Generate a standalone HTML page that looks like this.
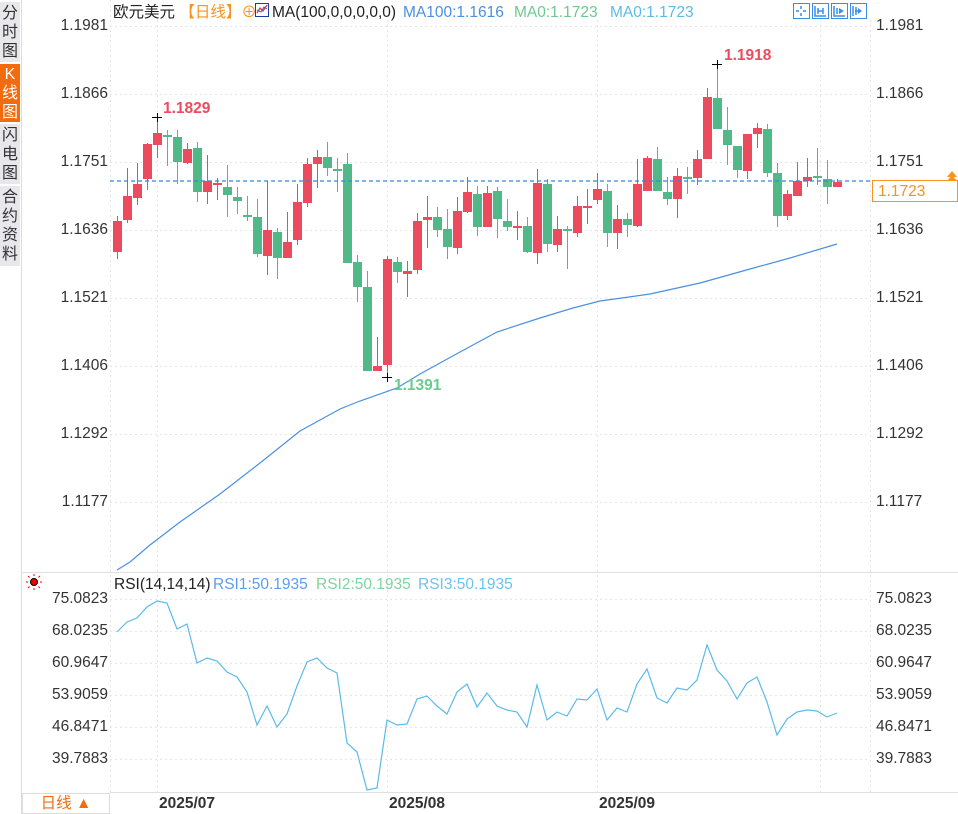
<!DOCTYPE html>
<html><head><meta charset="utf-8">
<style>
*{margin:0;padding:0;box-sizing:border-box}
body{width:958px;height:814px;background:#fff;position:relative;overflow:hidden;font-family:"Liberation Sans","Noto Sans CJK SC",sans-serif;}
.side{position:absolute;left:0;top:0;width:21px;height:814px;background:#fff;}
.tab{position:absolute;left:0;width:20px;background:#e8e8ec;color:#333;font-size:16px;line-height:19px;text-align:center;}
.tab.on{background:#f26b0f;color:#fff}
.t{position:absolute;font-size:15.5px;white-space:nowrap;line-height:17px}
.ax{position:absolute;font-size:15.5px;color:#333;line-height:17px}
svg{position:absolute;left:0;top:0}
</style></head><body>
<div class="side">
<div class="tab" style="top:2px;height:60px;padding-top:2px">分<br>时<br>图</div>
<div class="tab on" style="top:64px;height:58px;padding-top:1px">K<br>线<br>图</div>
<div class="tab" style="top:124px;height:60px;padding-top:2px">闪<br>电<br>图</div>
<div class="tab" style="top:186px;height:80px;padding-top:2px">合<br>约<br>资<br>料</div>
</div>
<svg id="s" width="958" height="814" viewBox="0 0 958 814"></svg>
<div class="t" style="left:113px;top:4px;color:#222">欧元美元 <span style="color:#f7931e">【日线】</span><span style="color:#f7931e">⊕</span></div>
<div class="t" style="left:272px;top:4px;color:#222">MA(100,0,0,0,0,0)</div>
<div class="t" style="left:403px;top:4px;color:#4a90e2">MA100:1.1616</div>
<div class="t" style="left:514px;top:4px;color:#6cc990">MA0:1.1723</div>
<div class="t" style="left:610px;top:4px;color:#5bbbe8">MA0:1.1723</div>
<div class="t" style="left:114px;top:576px;color:#222">RSI(14,14,14)</div>
<div class="t" style="left:213px;top:576px;color:#5b9ef0">RSI1:50.1935</div>
<div class="t" style="left:316px;top:576px;color:#7fd4a0">RSI2:50.1935</div>
<div class="t" style="left:418px;top:576px;color:#6cc3ee">RSI3:50.1935</div>
<div class="t" style="left:163px;top:100px;color:#eb4b5c;font-weight:bold">1.1829</div>
<div class="t" style="left:724px;top:47px;color:#eb4b5c;font-weight:bold">1.1918</div>
<div class="t" style="left:394px;top:377px;color:#6cc990;font-weight:bold">1.1391</div>
<div id="ax"></div>
<div class="t" style="left:872px;top:180px;width:86px;height:22px;border:1px solid #f7931e;color:#f7931e;padding:2px 0 0 5px">1.1723</div>
<div style="position:absolute;left:22px;top:793px;width:88px;height:21px;border:1px solid #ddd;color:#f26b0f;font-size:15.5px;text-align:center;line-height:20px">日线 ▲</div>
<div class="t" style="left:159px;top:795px;font-weight:bold;color:#333">2025/07</div>
<div class="t" style="left:389px;top:795px;font-weight:bold;color:#333">2025/08</div>
<div class="t" style="left:599px;top:795px;font-weight:bold;color:#333">2025/09</div>
<script>
var s=document.getElementById('s'),h='';
function L(x1,y1,x2,y2,c,w,d){h+='<line x1="'+x1+'" y1="'+y1+'" x2="'+x2+'" y2="'+y2+'" stroke="'+c+'" stroke-width="'+(w||1)+'"'+(d?' stroke-dasharray="'+d+'"':'')+'/>';}
L(21.5,0,21.5,814,'#ddd');L(110.5,0,110.5,792,'#e4e4e4',1,'2,3');L(870.5,20,870.5,792,'#e4e4e4',1,'2,3');
L(22,572.5,958,572.5,'#e0e0e0');L(110,792.5,958,792.5,'#e0e0e0');
var pl=['1.1981','1.1866','1.1751','1.1636','1.1521','1.1406','1.1292','1.1177'],ax='';
pl.forEach(function(p,i){var y=26+68*i;L(110,y+.5,870,y+.5,'#e6e6e6',1,'2,3');
ax+='<div class="ax" style="left:48px;top:'+(y-9)+'px;width:60px;text-align:right">'+p+'</div><div class="ax" style="left:876px;top:'+(y-9)+'px">'+p+'</div>';});
var rl=['75.0823','68.0235','60.9647','53.9059','46.8471','39.7883'];
rl.forEach(function(p,i){var y=599+32*i;L(110,y+.5,870,y+.5,'#e6e6e6',1,'2,3');
ax+='<div class="ax" style="left:30px;top:'+(y-9)+'px;width:78px;text-align:right">'+p+'</div><div class="ax" style="left:876px;top:'+(y-9)+'px">'+p+'</div>';});
document.getElementById('ax').innerHTML=ax;
[157,387,597,820].forEach(function(x){L(x+.5,20,x+.5,792,'#e6e6e6',1,'2,3');});
var C=[[221,252,216,259,1],[196,220,168,223,1],[184,198,163,205,1],[144,179,143,190,1],[133,145,118,158,1],[135,137,130,166,0],[137,162,130,184,0],[149,163,143,164,1],[148,192,142,202,0],[181,192,155,204,1],
[183,185,178,200,1],[187,195,165,217,0],[197,201,187,214,0],[215,217,196,221,0],[217,254,199,257,0],[230,256,181,275,1],[232,258,228,279,0],[242,258,212,258,1],[202,240,184,245,1],[164,203,158,207,1],
[157,164,150,188,1],[157,168,142,176,0],[169,171,158,192,0],[164,263,153,263,0],[262,287,255,302,0],[287,371,271,371,0],[366,371,337,371,1],[259,365,256,377,1],[262,272,257,283,0],[271,274,261,297,1],
[221,270,213,274,1],[217,220,196,248,1],[217,230,207,237,0],[229,247,209,259,0],[211,248,197,254,1],[192,212,177,213,1],[194,227,186,236,0],[193,227,186,227,1],[191,219,187,238,0],[221,227,199,231,0],
[226,228,211,240,1],[226,252,217,253,0],[183,253,169,264,1],[184,244,179,252,0],[229,245,216,252,1],[229,231,226,269,0],[206,233,196,237,1],[206,208,189,224,1],[189,200,173,204,1],[191,233,184,247,0],
[219,233,205,249,1],[219,225,213,237,0],[184,226,159,227,1],[158,191,156,191,1],[159,191,147,191,0],[192,199,177,205,0],[176,199,168,218,1],[177,179,167,194,0],[159,178,150,185,1],[97,159,88,159,1],
[98,129,64,129,0],[130,145,107,165,0],[146,170,146,178,0],[134,171,134,179,1],[128,134,123,148,1],[129,173,124,177,0],[173,216,163,227,0],[194,216,190,220,1],[181,196,162,196,1],[177,181,158,187,1],
[176,178,148,185,0],[179,187,160,204,0],[182,187,179,187,1]];
C.forEach(function(c,i){var x=117+10*i,col=c[4]?'#eb4b5c':'#50b987';L(x+.5,c[2],x+.5,c[3],col);
h+='<rect x="'+(x-4)+'" y="'+c[0]+'" width="9" height="'+Math.max(2,c[1]-c[0])+'" fill="'+col+'"/>';});
L(152,117.5,162,117.5,'#000');L(157.5,113,157.5,122,'#000');
L(712,64.5,722,64.5,'#000');L(717.5,60,717.5,69,'#000');
L(382,377.5,392,377.5,'#000');L(387.5,373,387.5,382,'#000');
h+='<polyline fill="none" stroke="#4a90e2" stroke-width="1.2" points="117,570 130,562 150,545 180,522 220,494 260,463 300,431 340,409 360,401 397,388 420,374 460,352 497,332 540,318 573,308 600,301 650,294 700,283 750,269 790,258 837,244"/>';
L(110,181,870,181,'#2f86eb',1.3,'4,3');
h+='<polygon points="947,177 957,177 952,171" fill="#f7931e"/><polygon points="947,181 957,181 952,175" fill="#f7931e"/>';
var R=[632,622,618,607,601,603,629,624,663,658,661,672,677,692,725,706,727,714,686,662,658,668,673,743,752,790,788,720,725,724,699,696,706,714,692,684,707,693,706,710,712,727,685,720,712,716,699,700,689,720,708,712,684,669,698,703,688,690,680,645,670,681,699,683,677,702,735,719,712,710,711,717,713];
h+='<polyline fill="none" stroke="#5bbbe8" stroke-width="1.2" points="'+R.map(function(y,i){return (117+10*i)+','+y}).join(' ')+'"/>';
h+='<circle cx="34" cy="582" r="3.5" fill="#e00" stroke="#000" stroke-width="1"/><g stroke="#e00" stroke-width="1"><line x1="34" y1="574" x2="34" y2="576"/><line x1="34" y1="588" x2="34" y2="590"/><line x1="26" y1="582" x2="28" y2="582"/><line x1="40" y1="582" x2="42" y2="582"/><line x1="28" y1="576" x2="29.5" y2="577.5"/><line x1="40" y1="576" x2="38.5" y2="577.5"/><line x1="28" y1="588" x2="29.5" y2="586.5"/><line x1="40" y1="588" x2="38.5" y2="586.5"/></g>';
h+='<rect x="255.5" y="3.5" width="13" height="13" fill="#fff" stroke="#1a3d9c"/><polyline points="257,13 260,8 263,11 267,5" fill="none" stroke="#e33" stroke-width="1.3"/><polyline points="257,10 261,12 264,7 267,9" fill="none" stroke="#36c" stroke-width="1"/>';
[793,812,831,850].forEach(function(x,i){h+='<rect x="'+(x+.5)+'" y="3.5" width="16" height="15" fill="#fff" stroke="#3a8ee6"/>';});
h+='<g stroke="#3a8ee6" stroke-width="1.5" fill="none"><path d="M801 6v3M801 13v3M796 11h3M803 11h3"/><path d="M815 6v10h11M818 8v6M823 8v6M818 11h5"/><path d="M834 6v10h11M837 8v6"/><path d="M853 6v10M856 7v8"/></g><path d="M839 8l5 3-5 3z" fill="#3a8ee6"/><path d="M858 8l4 3-4 3z" fill="#3a8ee6"/><path d="M855 11h4" stroke="#3a8ee6" stroke-width="1.5"/>';
s.innerHTML=h;
</script>
</body></html>
